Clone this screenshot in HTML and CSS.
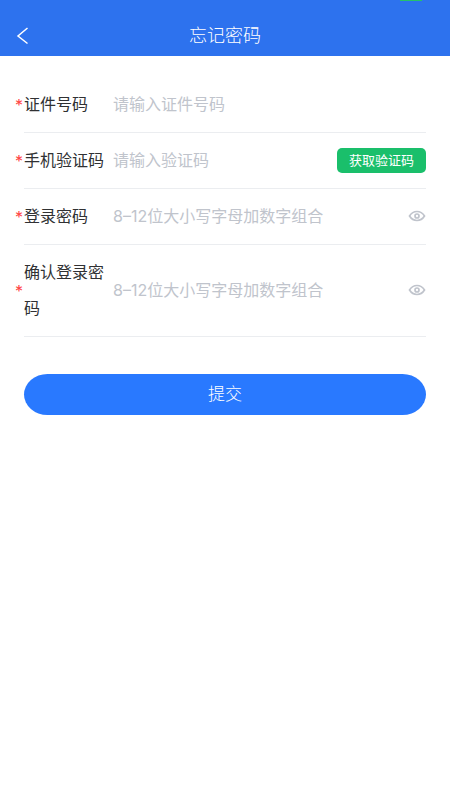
FILE: index.html
```html
<!DOCTYPE html>
<html lang="zh-CN">
<head>
  <meta charset="UTF-8" />
  <meta name="viewport" content="width=device-width, initial-scale=1.0"/>
  <title>忘记密码</title>
  <link rel="stylesheet" href="styles.css">
</head>
<body>
  <header class="navbar">
    <span class="status-pill"></span>
    <button type="button" class="back-btn" aria-label="返回">
      <svg viewBox="0 0 12 18" xmlns="http://www.w3.org/2000/svg">
        <path d="M11.500 1 L2 9 L11.500 16.500" fill="none" stroke="currentColor" stroke-width="1.500"/>
      </svg>
    </button>
    <h1 class="navbar-title">忘记密码</h1>
  </header>

  <form class="form">
    <div class="form-item">
      <span class="required">*</span>
      <label class="form-label" for="idNumber">证件号码</label>
      <input class="form-input" id="idNumber" type="text" placeholder="请输入证件号码">
    </div>

    <div class="form-item">
      <span class="required">*</span>
      <label class="form-label" for="smsCode">手机验证码</label>
      <input class="form-input" id="smsCode" type="text" placeholder="请输入验证码">
      <button type="button" class="code-btn">获取验证码</button>
    </div>

    <div class="form-item">
      <span class="required">*</span>
      <label class="form-label" for="password">登录密码</label>
      <input class="form-input" id="password" type="password" placeholder="8–12位大小写字母加数字组合">
      <button type="button" class="eye-btn" aria-label="显示密码">
        <svg viewBox="0 0 18 12" xmlns="http://www.w3.org/2000/svg">
          <path d="M1.500 6 C3.500 2.800 6 1.500 9 1.500 S14.500 2.800 16.500 6 C14.500 9.200 12 10.500 9 10.500 S3.500 9.200 1.500 6 Z" fill="none" stroke="currentColor" stroke-width="1.700"/>
          <circle cx="9" cy="6" r="2" fill="none" stroke="currentColor" stroke-width="1.700"/>
        </svg>
      </button>
    </div>

    <div class="form-item">
      <span class="required">*</span>
      <label class="form-label" for="confirmPassword">确认登录密码</label>
      <input class="form-input" id="confirmPassword" type="password" placeholder="8–12位大小写字母加数字组合">
      <button type="button" class="eye-btn" aria-label="显示密码">
        <svg viewBox="0 0 18 12" xmlns="http://www.w3.org/2000/svg">
          <path d="M1.500 6 C3.500 2.800 6 1.500 9 1.500 S14.500 2.800 16.500 6 C14.500 9.200 12 10.500 9 10.500 S3.500 9.200 1.500 6 Z" fill="none" stroke="currentColor" stroke-width="1.700"/>
          <circle cx="9" cy="6" r="2" fill="none" stroke="currentColor" stroke-width="1.700"/>
        </svg>
      </button>
    </div>

    <button type="submit" class="submit-btn">提交</button>
  </form>
</body>
</html>
```
FILE: styles.css
```css
* {
  box-sizing: border-box;
}

body {
  margin: 0;
  background-color: #fff;
  color: #303133;
  font-family: Inter, "Noto Sans CJK SC", sans-serif;
  font-size: 16px;
}

button,
input {
  margin: 0;
  padding: 0;
  border: none;
  background: none;
  font-family: inherit;
}

button {
  cursor: pointer;
}

svg {
  display: block;
  width: 100%;
  height: 100%;
}

/* NAVBAR */
.navbar {
  position: relative;
  display: grid;
  grid-template-columns: 32px 1fr 32px;
  align-items: center;
  padding: 16px 12px 0;
  height: 56px;
  background-color: #2d72ee;
  color: #fff;
}

.status-pill {
  position: absolute;
  top: 0;
  right: 28px;
  width: 22px;
  height: 1px;
  background-color: #25c16b;
}

.back-btn {
  width: 20px;
  height: 18px;
  color: #fff;
}

.navbar-title {
  margin: 0;
  font-size: 18px;
  font-weight: 300;
  line-height: 40px;
  text-align: center;
}

/* FORM */
.form {
  padding: 21px 24px;
}

.form-item {
  position: relative;
  display: flex;
  align-items: center;
  padding: 9px 0 10px;
  border-bottom: 1px solid #ebedf0;
}

.required {
  position: absolute;
  left: -9px;
  padding-top: 2px;
  color: #f44;
}

.form-label {
  flex: none;
  width: 82px;
  margin-right: 7px;
  line-height: 36px;
}

.form-input {
  flex: 1;
  min-width: 0;
  height: 36px;
  color: #303133;
  font-size: 16px;
  outline: none;
}

.form-input::placeholder {
  color: #c0c4cc;
  opacity: 1;
}

.code-btn {
  flex: none;
  padding: 0 12px;
  border-radius: 5px;
  background-color: #1abf6b;
  color: #fff;
  font-size: 13px;
  line-height: 25px;
}

.eye-btn {
  flex: none;
  width: 18px;
  height: 12px;
  color: #c0c4cc;
}

.submit-btn {
  display: block;
  width: 100%;
  margin-top: 37px;
  border-radius: 24px / 21px;
  background-color: #2979ff;
  color: #fff;
  font-size: 17px;
  font-weight: 300;
  line-height: 41px;
}
```
